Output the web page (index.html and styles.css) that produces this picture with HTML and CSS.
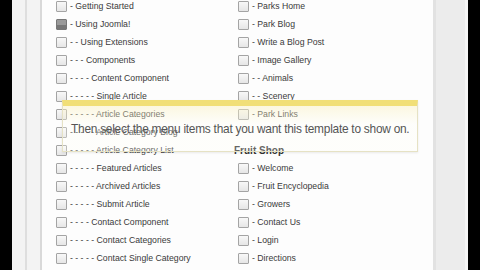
FILE: index.html
```html
<!DOCTYPE html>
<html lang="en">
<head>
  <meta charset="UTF-8">
  <title>Menu Assignment</title>
  <link rel="stylesheet" href="styles.css">
</head>
<body>

<div class="screen">
  <div class="edge"></div>
  <div class="gutter"><div class="gutter-line"></div></div>

  <div class="panel">
    <div class="menus">
      <!-- main menu -->
      <ul class="column">
        <li><span class="box"></span>- Getting Started</li>
        <li><span class="box checked"></span>- Using Joomla!</li>
        <li><span class="box"></span>- - Using Extensions</li>
        <li><span class="box"></span>- - - Components</li>
        <li><span class="box"></span>- - - - Content Component</li>
        <li><span class="box"></span>- - - - - Single Article</li>
        <li><span class="box"></span>- - - - - Article Categories</li>
        <li><span class="box"></span>- - - - - Article Category Blog</li>
        <li><span class="box"></span>- - - - - Article Category List</li>
        <li><span class="box"></span>- - - - - Featured Articles</li>
        <li><span class="box"></span>- - - - - Archived Articles</li>
        <li><span class="box"></span>- - - - - Submit Article</li>
        <li><span class="box"></span>- - - - Contact Component</li>
        <li><span class="box"></span>- - - - - Contact Categories</li>
        <li><span class="box"></span>- - - - - Contact Single Category</li>
      </ul>

      <!-- parks + fruit shop -->
      <ul class="column">
        <li><span class="box"></span>- Parks Home</li>
        <li><span class="box"></span>- Park Blog</li>
        <li><span class="box"></span>- Write a Blog Post</li>
        <li><span class="box"></span>- Image Gallery</li>
        <li><span class="box"></span>- - Animals</li>
        <li><span class="box"></span>- - Scenery</li>
        <li><span class="box"></span>- Park Links</li>
        <li class="spacer"></li>
        <li class="menu-title">Fruit Shop</li>
        <li><span class="box"></span>- Welcome</li>
        <li><span class="box"></span>- Fruit Encyclopedia</li>
        <li><span class="box"></span>- Growers</li>
        <li><span class="box"></span>- Contact Us</li>
        <li><span class="box"></span>- Login</li>
        <li><span class="box"></span>- Directions</li>
      </ul>
    </div>

    <div class="callout">Then select the menu items that you want this template to show on.</div>
  </div>

  <div class="side"></div>
  <div class="edge"></div>
</div>

</body>
</html>
```

FILE: styles.css
```css
body {
  margin: 0;
  padding: 0;
  background-color: #000;
  font-family: 'Liberation Sans', Arial, sans-serif;
  overflow: hidden;
}

.screen {
  display: flex;
  width: 480px;
  height: 270px;
}

.edge {
  width: 12px;
  background-color: #000;
}

.gutter {
  width: 15px;
  padding-left: 13px;
  background-color: #f3f3f3;
  border-right: 2px solid #d9d9d9;
  display: flex;
}

.gutter-line {
  width: 2px;
  background-color: #dedede;
}

.panel {
  position: relative;
  width: 391px;
  background-color: #fdfdfd;
  border-right: 3px solid #e2e2e2;
  overflow: hidden;
}

.side {
  width: 29px;
  background-color: #ececec;
  border-right: 3px solid #f6f6f6;
}

.menus {
  display: grid;
  grid-template-columns: 182px 182px;
  margin-top: -3px;
  padding-left: 14px;
}

.column {
  list-style: none;
  margin: 0;
  padding: 0;
}

.column li {
  display: flex;
  align-items: center;
  height: 18px;
  font-size: 8.7px;
  color: #3a3a3a;
  white-space: nowrap;
}

.column li.spacer {
  height: 18px;
}

.column li.menu-title {
  font-weight: bold;
  font-size: 10px;
  color: #333;
  margin-left: -4px;
}

.box {
  display: inline-block;
  width: 9px;
  height: 9px;
  margin-right: 3px;
  border: 1px solid #a4a4a4;
  border-radius: 1px;
  background: linear-gradient(#f8f8f8, #e6e6e6);
}

.box.checked {
  border-color: #777;
  background: linear-gradient(#9a9a9a 0%, #9a9a9a 50%, #777 50%, #777 100%);
}

.callout {
  position: absolute;
  left: 20px;
  top: 100px;
  width: 346px;
  height: 29px;
  padding: 16px 0 0 8px;
  border: 1px solid #e6e2c4;
  border-top: 6px solid #f1df78;
  background: linear-gradient(rgba(250, 240, 190, 0.45), rgba(255, 255, 245, 0.25) 40%);
  box-shadow: 0 1px 2px rgba(0, 0, 0, 0.08);
  font-size: 11.9px;
  color: #555;
  white-space: nowrap;
  letter-spacing: -0.25px;
}
```
